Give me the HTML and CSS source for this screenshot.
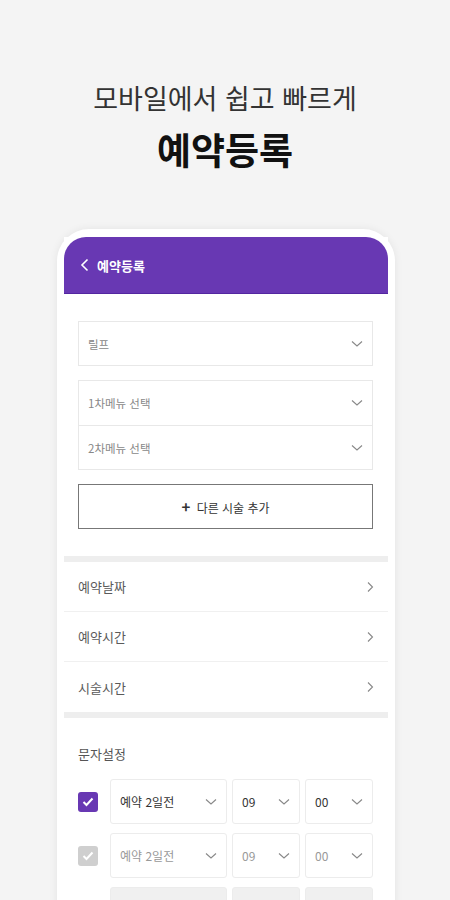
FILE: index.html
```html
<!DOCTYPE html>
<html lang="ko">
<head>
  <meta charset="UTF-8">
  <meta name="viewport" content="width=device-width, initial-scale=1.0">
  <title>예약등록</title>
  <link rel="stylesheet" href="styles.css">
</head>
<body>
  <div class="intro">
    <p class="sub">모바일에서 쉽고 빠르게</p>
    <h1>예약등록</h1>
  </div>

  <div class="phone">
    <div class="screen">
      <div class="appbar">
        <svg class="back" width="10" height="14" viewBox="0 0 10 14"><path d="M7.5 1.5 2 7l5.5 5.5" fill="none" stroke="#fff" stroke-width="1.6"/></svg>
        <span>예약등록</span>
      </div>

      <div class="menus">
        <div class="select">
          <span>릴프</span>
          <svg class="down" width="12" height="8" viewBox="0 0 12 8"><path d="M1 1.5l5 4.5 5-4.5" fill="none" stroke="#888" stroke-width="1.1"/></svg>
        </div>

        <div class="select-group">
          <div class="select">
            <span>1차메뉴 선택</span>
            <svg class="down" width="12" height="8" viewBox="0 0 12 8"><path d="M1 1.5l5 4.5 5-4.5" fill="none" stroke="#888" stroke-width="1.1"/></svg>
          </div>
          <div class="select">
            <span>2차메뉴 선택</span>
            <svg class="down" width="12" height="8" viewBox="0 0 12 8"><path d="M1 1.5l5 4.5 5-4.5" fill="none" stroke="#888" stroke-width="1.1"/></svg>
          </div>
        </div>

        <button class="add-btn"><b>+</b> 다른 시술 추가</button>
      </div>

      <div class="band"></div>

      <ul class="rows">
        <li>예약날짜 <svg width="8" height="12" viewBox="0 0 8 12"><path d="M2 1.5 6.5 6 2 10.5" fill="none" stroke="#888" stroke-width="1.1"/></svg></li>
        <li>예약시간 <svg width="8" height="12" viewBox="0 0 8 12"><path d="M2 1.5 6.5 6 2 10.5" fill="none" stroke="#888" stroke-width="1.1"/></svg></li>
        <li>시술시간 <svg width="8" height="12" viewBox="0 0 8 12"><path d="M2 1.5 6.5 6 2 10.5" fill="none" stroke="#888" stroke-width="1.1"/></svg></li>
      </ul>

      <div class="band"></div>

      <div class="sms">
        <p class="sms-title">문자설정</p>

        <div class="sms-row">
          <span class="check on"><svg width="12" height="10" viewBox="0 0 12 10"><path d="M1.5 5l3 3 6-6.5" fill="none" stroke="#fff" stroke-width="2"/></svg></span>
          <div class="select wide"><span class="val">예약 2일전</span><svg class="down" width="12" height="8" viewBox="0 0 12 8"><path d="M1 1.5l5 4.5 5-4.5" fill="none" stroke="#888" stroke-width="1.1"/></svg></div>
          <div class="select small"><span class="val">09</span><svg class="down" width="12" height="8" viewBox="0 0 12 8"><path d="M1 1.5l5 4.5 5-4.5" fill="none" stroke="#888" stroke-width="1.1"/></svg></div>
          <div class="select small"><span class="val">00</span><svg class="down" width="12" height="8" viewBox="0 0 12 8"><path d="M1 1.5l5 4.5 5-4.5" fill="none" stroke="#888" stroke-width="1.1"/></svg></div>
        </div>

        <div class="sms-row">
          <span class="check"><svg width="12" height="10" viewBox="0 0 12 10"><path d="M1.5 5l3 3 6-6.5" fill="none" stroke="#fff" stroke-width="2"/></svg></span>
          <div class="select wide"><span>예약 2일전</span><svg class="down" width="12" height="8" viewBox="0 0 12 8"><path d="M1 1.5l5 4.5 5-4.5" fill="none" stroke="#888" stroke-width="1.1"/></svg></div>
          <div class="select small"><span>09</span><svg class="down" width="12" height="8" viewBox="0 0 12 8"><path d="M1 1.5l5 4.5 5-4.5" fill="none" stroke="#888" stroke-width="1.1"/></svg></div>
          <div class="select small"><span>00</span><svg class="down" width="12" height="8" viewBox="0 0 12 8"><path d="M1 1.5l5 4.5 5-4.5" fill="none" stroke="#888" stroke-width="1.1"/></svg></div>
        </div>

        <div class="sms-row">
          <span class="check off"></span>
          <div class="select wide disabled"></div>
          <div class="select small disabled"></div>
          <div class="select small disabled"></div>
        </div>
      </div>
    </div>
  </div>
</body>
</html>
```

FILE: styles.css
```css
body {
    font-family: "Noto Sans CJK KR", "Noto Sans", sans-serif;
    background-color: #f4f4f4;
    margin: 0;
    padding: 80px 0 0;
    height: 820px;
    overflow: hidden;
}

.intro {
    text-align: center;
}

.sub {
    margin: 0;
    font-size: 27px;
    line-height: 36px;
    color: #333;
    font-weight: 400;
}

h1 {
    margin: 10px 0 0;
    font-size: 37px;
    line-height: 47px;
    color: #111;
    font-weight: 700;
}

.phone {
    width: 324px;
    margin: 56px auto 0;
    padding: 8px 7px 0;
    background-color: #fff;
    border-radius: 32px 32px 0 0;
    box-shadow: 0 0 8px rgba(0,0,0,0.07);
    transform: translateX(1px);
}

.screen {
    background-color: #fff;
}

.appbar {
    height: 56px;
    background-color: #6838b3;
    border-bottom: 1px solid #5326a0;
    border-radius: 22px 22px 0 0;
    display: flex;
    align-items: center;
    padding-left: 16px;
    color: #fff;
    font-size: 13px;
    font-weight: 700;
}

.appbar .back {
    margin-right: 7px;
}

.menus {
    padding: 27px 15px 27px 14px;
}

.select {
    height: 45px;
    border: 1px solid #e8e8e8;
    box-sizing: border-box;
    display: flex;
    align-items: center;
    justify-content: space-between;
    padding: 0 9px 0 9px;
    font-size: 11.5px;
    color: #888;
}

.select-group {
    margin-top: 14px;
    border: 1px solid #e8e8e8;
}

.select-group .select {
    border: none;
    height: 44px;
}

.select-group .select + .select {
    border-top: 1px solid #e8e8e8;
}

.add-btn {
    display: block;
    width: 100%;
    height: 45px;
    margin-top: 14px;
    background-color: #fff;
    border: 1px solid #777;
    font-family: inherit;
    font-size: 12px;
    color: #333;
}

.add-btn b {
    font-size: 15px;
    margin-right: 3px;
}

.band {
    height: 6px;
    background-color: #eeeeee;
}

.rows {
    list-style: none;
    margin: 0;
    padding: 0;
}

.rows li {
    height: 50px;
    box-sizing: border-box;
    display: flex;
    align-items: center;
    justify-content: space-between;
    padding: 0 14px;
    font-size: 13px;
    color: #5a5a5a;
    border-bottom: 1px solid #f0f0f0;
}

.rows li:last-child {
    border-bottom: none;
}

.sms {
    padding: 26px 15px 0 14px;
}

.sms-title {
    margin: 0 0 16px;
    font-size: 13px;
    color: #555;
}

.sms-row {
    display: flex;
    align-items: center;
    gap: 5px;
    margin-bottom: 9px;
}

.check {
    width: 20px;
    height: 20px;
    border-radius: 3px;
    background-color: #cfcfcf;
    display: flex;
    align-items: center;
    justify-content: center;
    margin-right: 7px;
    flex-shrink: 0;
}

.check.on {
    background-color: #6838b3;
}

.check.off {
    background-color: #ececec;
}

.sms .select {
    border-color: #ececec;
    border-radius: 3px;
    padding: 0 9px 0 9px;
    color: #999;
    font-size: 12px;
}

.sms .select .val {
    color: #333;
}

.select.wide {
    width: 117px;
}

.select.small {
    width: 68px;
}

.select.disabled {
    background-color: #f0f0f0;
}
```
